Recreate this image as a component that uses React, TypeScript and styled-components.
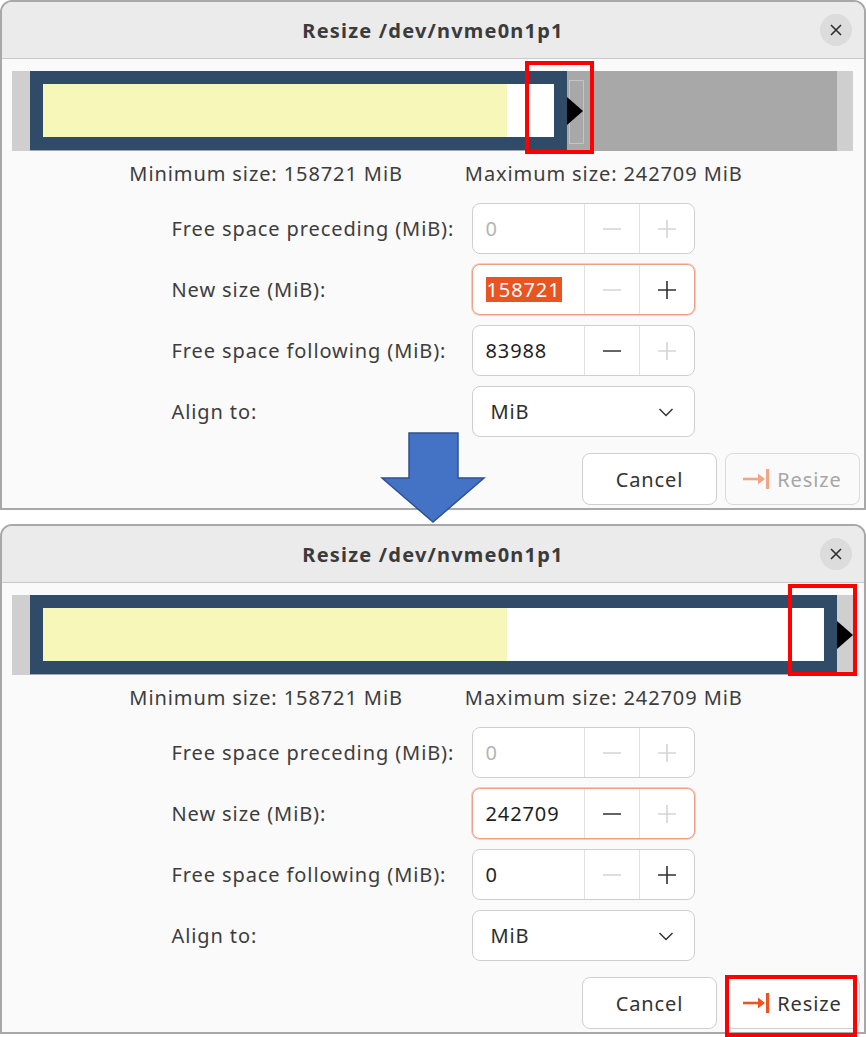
import React, { FC } from "react";
import styled, { createGlobalStyle, css } from "styled-components";

const GlobalStyle = createGlobalStyle`
  html, body {
    margin: 0;
    padding: 0;
    background: #ffffff;
  }
  body {
    font-family: "Noto Sans", "Open Sans", sans-serif;
    font-size: 20px;
    letter-spacing: 0.9px;
    color: #3d3d3d;
  }
`;

const MAX_SIZE = 242709;
const USED = 144350;

interface IDialogState {
  size: number;
  preceding: string;
  following: string;
  selected: boolean;
  minusOn: [boolean, boolean, boolean];
  plusOn: [boolean, boolean, boolean];
  canResize: boolean;
}

const states: IDialogState[] = [
  {
    size: 158721,
    preceding: "0",
    following: "83988",
    selected: true,
    minusOn: [false, false, true],
    plusOn: [false, true, false],
    canResize: false,
  },
  {
    size: 242709,
    preceding: "0",
    following: "0",
    selected: false,
    minusOn: [false, true, false],
    plusOn: [false, false, true],
    canResize: true,
  },
];

const Page = styled.div`
  position: relative;
  width: 866px;
  height: 1037px;
  display: flex;
  flex-direction: column;
  gap: 14px;
`;

const Dialog = styled.div`
  box-sizing: border-box;
  width: 866px;
  height: 510px;
  border: 2px solid #a8a8a8;
  border-radius: 12px 12px 0 0;
  background: #fafafa;
  display: flex;
  flex-direction: column;
  overflow: hidden;
`;

const TitleBar = styled.div`
  position: relative;
  height: 56px;
  flex-shrink: 0;
  background: #ebebeb;
  border-bottom: 1px solid #c9c9c9;
  display: flex;
  align-items: center;
  justify-content: center;
`;

const Title = styled.div`
  font-size: 20px;
  font-weight: 700;
  color: #3b3b3b;
  letter-spacing: 1.2px;
`;

const CloseButton = styled.div`
  position: absolute;
  right: 12px;
  top: 12px;
  width: 32px;
  height: 32px;
  border-radius: 50%;
  background: #dcdcdc;
  display: flex;
  align-items: center;
  justify-content: center;
`;

const Body = styled.div`
  display: flex;
  flex-direction: column;
  padding: 12px 4px 0 10px;
`;

const Strip = styled.div`
  height: 80px;
  margin-right: 7px;
  background: #cfcfcf;
  padding: 0 16px 0 18px;
  display: flex;
`;

const Track = styled.div`
  flex: 1;
  display: flex;
  background: #a8a8a8;
`;

const Partition = styled.div`
  position: relative;
  box-sizing: border-box;
  height: 79px;
  background: #2f4b68;
  padding: 13px;
  display: flex;
  flex-shrink: 0;
`;

const Inner = styled.div`
  flex: 1;
  background: #ffffff;
  display: flex;
`;

const Used = styled.div`
  background: #f7f7b9;
`;

const Handle = styled.div`
  position: absolute;
  left: calc(100% + 2px);
  top: 9px;
  width: 13px;
  height: 62px;
  border: 1px solid #c4c4c4;
`;

const Pointer = styled.div`
  position: absolute;
  left: 100%;
  top: 26px;
  width: 0;
  height: 0;
  border-top: 14px solid transparent;
  border-bottom: 14px solid transparent;
  border-left: 16px solid #000000;
`;

const Limits = styled.div`
  display: flex;
  justify-content: center;
  gap: 62px;
  height: 24px;
  margin-top: 10px;
  align-items: center;
  color: #3d3d3d;
`;

const Form = styled.div`
  display: grid;
  grid-template-columns: 286px 223px;
  column-gap: 14px;
  row-gap: 10px;
  grid-auto-rows: 51px;
  justify-content: center;
  margin-top: 18px;
  margin-right: 6px;
`;

const Label = styled.div`
  display: flex;
  align-items: center;
  color: #3d3d3d;
  white-space: nowrap;
`;

const SpinBox = styled.div<{ focused?: boolean }>`
  box-sizing: border-box;
  display: flex;
  background: #ffffff;
  border: 1px solid #cfcfcf;
  border-radius: 8px;
  overflow: hidden;
  ${({ focused }) =>
    focused &&
    css`
      border-color: #ef9f83;
      box-shadow: 0 0 0 1px #f8cbbb;
    `}
`;

const Entry = styled.div<{ disabled?: boolean }>`
  flex: 1;
  display: flex;
  align-items: center;
  padding-left: 13px;
  color: ${({ disabled }) => (disabled ? "#b4b4b4" : "#1f1f1f")};
`;

const Selection = styled.span`
  background: #e95420;
  color: #ffffff;
  padding: 0 1px;
  line-height: 25px;
`;

const SpinButton = styled.div`
  width: 54px;
  border-left: 1px solid #e2e2e2;
  display: flex;
  align-items: center;
  justify-content: center;
`;

const Combo = styled.div`
  box-sizing: border-box;
  display: flex;
  align-items: center;
  justify-content: space-between;
  padding: 0 20px 0 18px;
  background: #ffffff;
  border: 1px solid #cfcfcf;
  border-radius: 8px;
  color: #2d2d2d;
`;

const Actions = styled.div`
  display: flex;
  justify-content: flex-end;
  gap: 8px;
  margin-top: 16px;
`;

const Button = styled.div<{ disabled?: boolean }>`
  box-sizing: border-box;
  width: 135px;
  height: 52px;
  display: flex;
  align-items: center;
  justify-content: center;
  gap: 6px;
  border: 1px solid ${({ disabled }) => (disabled ? "#dadada" : "#cfcfcf")};
  border-radius: 8px;
  background: ${({ disabled }) => (disabled ? "#fafafa" : "#ffffff")};
  color: ${({ disabled }) => (disabled ? "#a6a6a6" : "#333333")};
`;

const BlueArrow = styled.svg`
  position: absolute;
  left: 380px;
  top: 432px;
`;

const Mark = styled.div`
  position: absolute;
  box-sizing: border-box;
  border: 4px solid #ff0000;
`;

const Minus: FC<{ on: boolean }> = ({ on }) => (
  <svg width="20" height="20" viewBox="0 0 20 20">
    <line x1="1" y1="10" x2="19" y2="10" stroke={on ? "#303030" : "#d4d4d4"} strokeWidth="1.6" />
  </svg>
);

const Plus: FC<{ on: boolean }> = ({ on }) => (
  <svg width="20" height="20" viewBox="0 0 20 20">
    <line x1="1" y1="10" x2="19" y2="10" stroke={on ? "#303030" : "#d4d4d4"} strokeWidth="1.6" />
    <line x1="10" y1="1" x2="10" y2="19" stroke={on ? "#303030" : "#d4d4d4"} strokeWidth="1.6" />
  </svg>
);

const ResizeIcon: FC<{ on: boolean }> = ({ on }) => {
  const c = on ? "#e95420" : "#f2a487";
  return (
    <svg width="28" height="22" viewBox="0 0 28 22">
      <line x1="0" y1="11" x2="19" y2="11" stroke={c} strokeWidth="2.6" />
      <polygon points="15,5.5 22,11 15,16.5" fill={c} />
      <rect x="23" y="1" width="3.2" height="20" fill={c} />
    </svg>
  );
};

const ResizeDialog: FC<{ state: IDialogState }> = ({ state }) => {
  const ratio = state.size / MAX_SIZE;
  const rows = [
    { label: "Free space preceding (MiB):", value: state.preceding, disabled: true },
    { label: "New size (MiB):", value: String(state.size), disabled: false },
    { label: "Free space following (MiB):", value: state.following, disabled: false },
  ];

  return (
    <Dialog>
      <TitleBar>
        <Title>Resize /dev/nvme0n1p1</Title>
        <CloseButton>
          <svg width="12" height="12" viewBox="0 0 12 12">
            <path d="M1 1 L11 11 M11 1 L1 11" stroke="#2e2e2e" strokeWidth="1.6" />
          </svg>
        </CloseButton>
      </TitleBar>
      <Body>
        <Strip>
          <Track>
            <Partition style={{ width: `calc(26px + (100% - 26px) * ${ratio})` }}>
              <Inner>
                <Used style={{ width: `${(USED / state.size) * 100}%` }} />
              </Inner>
              {ratio < 1 && <Handle />}
              <Pointer />
            </Partition>
          </Track>
        </Strip>
        <Limits>
          <span>Minimum size: 158721 MiB</span>
          <span>Maximum size: 242709 MiB</span>
        </Limits>
        <Form>
          {rows.map((row, i) => (
            <React.Fragment key={row.label}>
              <Label>{row.label}</Label>
              <SpinBox focused={i === 1}>
                <Entry disabled={row.disabled}>
                  {i === 1 && state.selected ? <Selection>{row.value}</Selection> : row.value}
                </Entry>
                <SpinButton>
                  <Minus on={state.minusOn[i]} />
                </SpinButton>
                <SpinButton>
                  <Plus on={state.plusOn[i]} />
                </SpinButton>
              </SpinBox>
            </React.Fragment>
          ))}
          <Label>Align to:</Label>
          <Combo>
            <span>MiB</span>
            <svg width="16" height="10" viewBox="0 0 16 10">
              <path d="M1.5 2 L8 8.5 L14.5 2" fill="none" stroke="#333" strokeWidth="1.5" />
            </svg>
          </Combo>
        </Form>
        <Actions>
          <Button>Cancel</Button>
          <Button disabled={!state.canResize}>
            <ResizeIcon on={state.canResize} />
            <span>Resize</span>
          </Button>
        </Actions>
      </Body>
    </Dialog>
  );
};

export default function App() {
  return (
    <>
      <GlobalStyle />
      <Page>
        {states.map((s, i) => (
          <ResizeDialog key={i} state={s} />
        ))}
        <BlueArrow width="106" height="92" viewBox="0 0 106 92">
          <polygon
            points="29,1 78,1 78,46 104,46 53,90 2,46 29,46"
            fill="#4472c4"
            stroke="#2f528f"
            strokeWidth="1.5"
          />
        </BlueArrow>
        <Mark style={{ left: 525, top: 61, width: 69, height: 93 }} />
        <Mark style={{ left: 788, top: 584, width: 69, height: 92 }} />
        <Mark style={{ left: 725, top: 975, width: 132, height: 62 }} />
      </Page>
    </>
  );
}
